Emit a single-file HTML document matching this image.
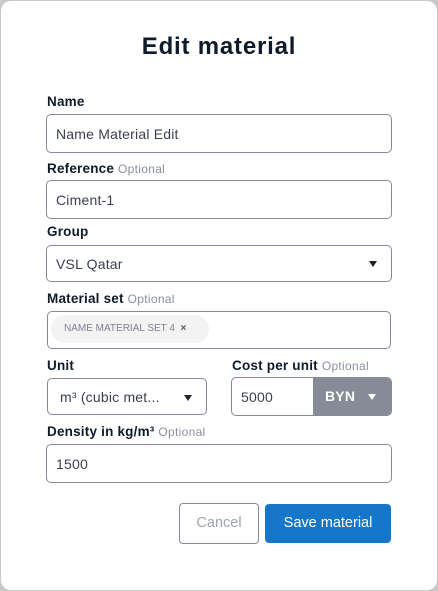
<!DOCTYPE html>
<html><head><meta charset="utf-8"><style>
*{box-sizing:border-box;margin:0;padding:0}
body{width:438px;height:591px;background:#c9c9c9;font-family:"Liberation Sans",sans-serif;position:relative;overflow:hidden}
.card{position:absolute;left:1px;top:1px;width:436px;height:589px;background:#fff;border-radius:10px}
.a{position:absolute}
h1{position:absolute;left:0;width:438px;top:33px;text-align:center;font-size:24px;letter-spacing:0.8px;font-weight:bold;color:#0d1b2a}
.lbl{position:absolute;left:47px;font-size:13.5px;letter-spacing:0.2px;font-weight:bold;color:#0d1b2a}
.lbl span{font-weight:normal;color:#8a909c;font-size:12px;letter-spacing:0.3px}
.in{position:absolute;border:1px solid #868b98;border-radius:5px;font-size:14px;letter-spacing:0.2px;color:#3a3f4a;padding-left:9px;display:flex;align-items:center}
.tri{position:absolute;width:0;height:0;border-left:4.5px solid transparent;border-right:4.5px solid transparent;border-top:6px solid #222}
</style></head><body>
<div class="card"></div>
<h1>Edit material</h1>
<div class="lbl" style="top:94px">Name</div>
<div class="in" style="left:46px;top:114px;width:346px;height:39px">Name Material Edit</div>
<div class="lbl" style="top:161px">Reference <span>Optional</span></div>
<div class="in" style="left:46px;top:180px;width:346px;height:39px">Ciment-1</div>
<div class="lbl" style="top:224px">Group</div>
<div class="in" style="left:46px;top:245px;width:346px;height:37px">VSL Qatar</div>
<div class="tri" style="left:369px;top:261px"></div>
<div class="lbl" style="top:291px">Material set <span>Optional</span></div>
<div class="in" style="left:47px;top:311px;width:344px;height:38px"></div>
<div class="a" style="left:51px;top:315px;width:158px;height:28px;background:#f3f3f4;border-radius:14px;font-size:10px;color:#7d828e;line-height:28px;padding-left:13px">NAME MATERIAL SET 4 &nbsp;<b style="color:#555">×</b></div>
<div class="lbl" style="top:358px">Unit</div>
<div class="lbl" style="left:232px;top:358px">Cost per unit <span>Optional</span></div>
<div class="in" style="left:47px;top:378px;width:160px;height:37px;padding-left:12px">m³ (cubic met...</div>
<div class="tri" style="left:184px;top:395px"></div>
<div class="in" style="left:231px;top:377px;width:161px;height:39px;overflow:hidden">5000
<div class="a" style="left:81px;top:-1px;width:80px;height:39px;background:#878b97;color:#fff;font-weight:bold;font-size:14px;line-height:39px;padding-left:12px">BYN</div></div>
<div class="tri" style="left:368px;top:394px;border-top-color:#fff"></div>
<div class="lbl" style="top:424px">Density in kg/m³ <span>Optional</span></div>
<div class="in" style="left:46px;top:444px;width:346px;height:39px">1500</div>
<div class="a" style="left:179px;top:503px;width:80px;height:41px;border:1px solid #868b98;border-radius:4px;color:#a0a4ad;font-size:14.5px;text-align:center;line-height:39px">Cancel</div>
<div class="a" style="left:265px;top:504px;width:126px;height:39px;background:#1677c8;border-radius:4px;color:#fff;font-size:14.5px;text-align:center;line-height:39px">Save material</div>
</body></html>
